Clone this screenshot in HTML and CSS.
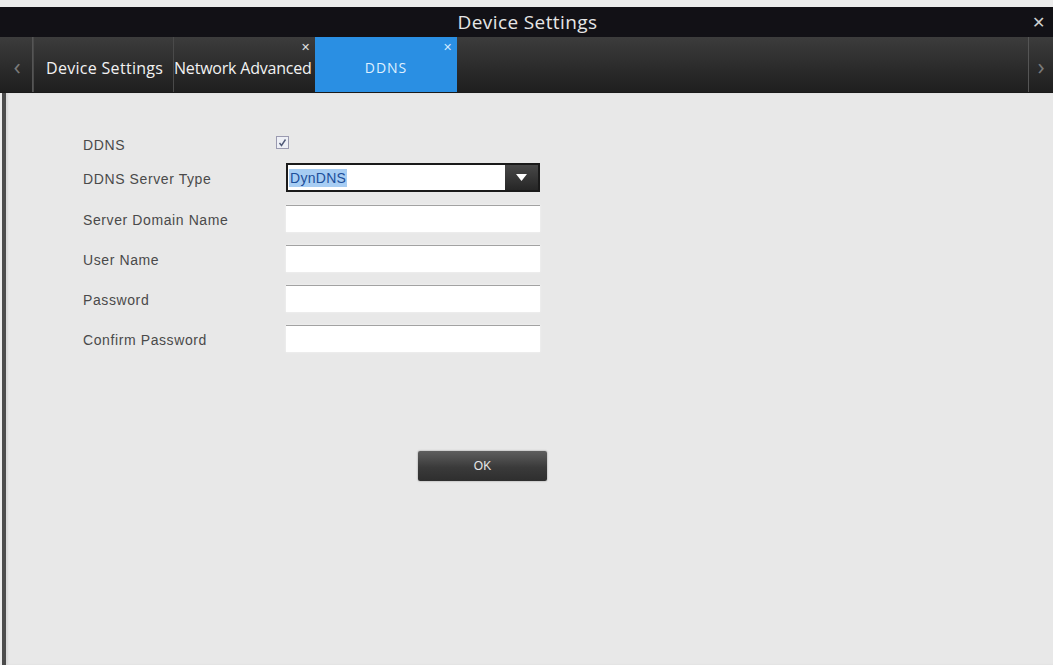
FILE: index.html
```html
<!DOCTYPE html>
<html lang="en">
<head>
    <meta charset="UTF-8">
    <title>Device Settings</title>
    <link rel="stylesheet" href="styles.css">
</head>
<body>
    <div class="window">
        <div class="title-bar">
            <span class="title">Device Settings</span>
            <span class="close">&#x2715;</span>
        </div>
        <div class="tab-bar">
            <div class="nav nav-left">&#x2039;</div>
            <div class="tab">Device Settings</div>
            <div class="tab tab-narrow">Network Advanced<span class="tab-close">&#x2715;</span></div>
            <div class="tab active">DDNS<span class="tab-close">&#x2715;</span></div>
            <div class="tab-fill"></div>
            <div class="nav nav-right">&#x203A;</div>
        </div>
        <div class="content">
            <div class="form">
                <div class="row row-check">
                    <label>DDNS</label>
                    <span class="checkbox">
                        <svg width="9" height="9" viewBox="0 0 9 9"><path d="M1.5 5 L3.5 7.5 L7.5 1.5" fill="none" stroke="#505a78" stroke-width="1.4"/></svg>
                    </span>
                </div>
                <div class="row row-select">
                    <label>DDNS Server Type</label>
                    <div class="select">
                        <span class="select-value"><span class="selected">DynDNS</span></span>
                        <span class="select-arrow">
                            <svg width="11" height="7" viewBox="0 0 11 7"><path d="M0 0 H11 L5.5 7 Z" fill="#fff"/></svg>
                        </span>
                    </div>
                </div>
                <div class="row">
                    <label>Server Domain Name</label>
                    <input type="text" class="field">
                </div>
                <div class="row">
                    <label>User Name</label>
                    <input type="text" class="field">
                </div>
                <div class="row">
                    <label>Password</label>
                    <input type="password" class="field">
                </div>
                <div class="row">
                    <label>Confirm Password</label>
                    <input type="password" class="field">
                </div>
            </div>
            <div class="actions">
                <button class="ok-btn">OK</button>
            </div>
        </div>
    </div>
</body>
</html>
```

FILE: styles.css
```css
html, body {
    margin: 0;
    padding: 0;
    height: 100%;
}

body {
    font-family: 'Liberation Sans', Arial, sans-serif;
    background-color: #ececec;
    overflow: hidden;
}

.window {
    display: flex;
    flex-direction: column;
    height: 658px;
    margin-top: 7px;
}

.title-bar {
    height: 30px;
    background-color: #121116;
    display: flex;
    align-items: center;
    justify-content: center;
    position: relative;
    color: #e6e6e6;
}

.title {
    font-family: 'Open Sans', sans-serif;
    font-size: 19px;
    letter-spacing: 0.4px;
    margin-left: 2px;
}

.close {
    position: absolute;
    right: 8px;
    top: 6px;
    font-size: 16px;
    color: #d0d0d0;
}

.tab-bar {
    height: 55px;
    display: flex;
    background: linear-gradient(#3c3c3c, #2a2a2a 60%, #1f1f1f);
    border-bottom: 1px solid #1a1a1a;
    font-family: 'Open Sans', sans-serif;
}

.nav {
    width: 30px;
    display: flex;
    align-items: center;
    justify-content: center;
    color: #7a7a7a;
    font-size: 24px;
    padding-top: 2px;
}

.nav-left {
    border-right: 1px solid #555;
    margin-left: 2px;
}

.nav-right {
    width: 24px;
    border-left: 1px solid #555;
}

.tab {
    width: 140px;
    position: relative;
    display: flex;
    align-items: center;
    padding: 6px 0 0 12px;
    box-sizing: border-box;
    color: #f2f2f2;
    font-size: 16px;
    letter-spacing: 0.3px;
    white-space: nowrap;
    overflow: hidden;
    border-left: 1px solid #4a4a4a;
}

.tab + .tab {
    padding-left: 0;
    width: 142px;
}

.tab-narrow {
    letter-spacing: -0.2px;
}

.tab.active {
    background-color: #2a8fe3;
    justify-content: center;
    color: #dff0ff;
    font-size: 14px;
    letter-spacing: 1px;
    border-left: none;
}

.tab-close {
    position: absolute;
    top: 2px;
    right: 5px;
    padding-left: 2px;
    font-size: 11px;
    color: #e0e0e0;
}

.tab.active .tab-close {
    color: #cfe8ff;
    right: 4px;
}

.tab-fill {
    flex: 1;
}

.content {
    flex: 1;
    background-color: #e8e8e8;
    border-left: 4px solid #4c4c4c;
    margin-left: 2px;
    box-shadow: inset 2px 0 2px #d8d8d8;
}

.form {
    padding: 36px 0 0 77px;
}

.row {
    display: flex;
    align-items: center;
    height: 40px;
}

.row-check {
    height: 28px;
}

.row-select {
    height: 41px;
}

.row label {
    width: 203px;
    font-size: 14px;
    letter-spacing: 0.6px;
    color: #4a4a4a;
    padding-top: 3px;
}

.checkbox {
    width: 11px;
    height: 11px;
    border: 1px solid #9a9ab0;
    background: #eef0f6;
    display: flex;
    align-items: center;
    justify-content: center;
    margin-left: -10px;
    margin-top: -2px;
}

.select {
    width: 254px;
    height: 29px;
    box-sizing: border-box;
    border: 2px solid #1a1a1a;
    display: flex;
    background: #fff;
}

.select-value {
    flex: 1;
    display: flex;
    align-items: center;
    padding-left: 1px;
    font-size: 14px;
}

.selected {
    background-color: #a7cdf3;
    color: #1d4f9a;
    padding: 1px 1px;
    letter-spacing: 0.3px;
}

.select-arrow {
    width: 33px;
    background: linear-gradient(#484848, #262626);
    display: flex;
    align-items: center;
    justify-content: center;
}

.field {
    width: 254px;
    height: 27px;
    box-sizing: border-box;
    border: none;
    border-top: 1px solid #a2a2a2;
    background: #fff;
    margin: 0;
    padding: 0;
    box-shadow: 0 0 2px #f4f4f4;
}

.actions {
    padding: 93px 0 0 412px;
}

.ok-btn {
    width: 129px;
    height: 30px;
    border: none;
    border-radius: 2px;
    background: linear-gradient(#5e5e5e, #3a3a3a 55%, #2e2e2e);
    box-shadow: 0 0 2px #8a8a8a;
    color: #e6e6e6;
    font-family: 'Liberation Sans', Arial, sans-serif;
    font-size: 12px;
    cursor: pointer;
}
```
